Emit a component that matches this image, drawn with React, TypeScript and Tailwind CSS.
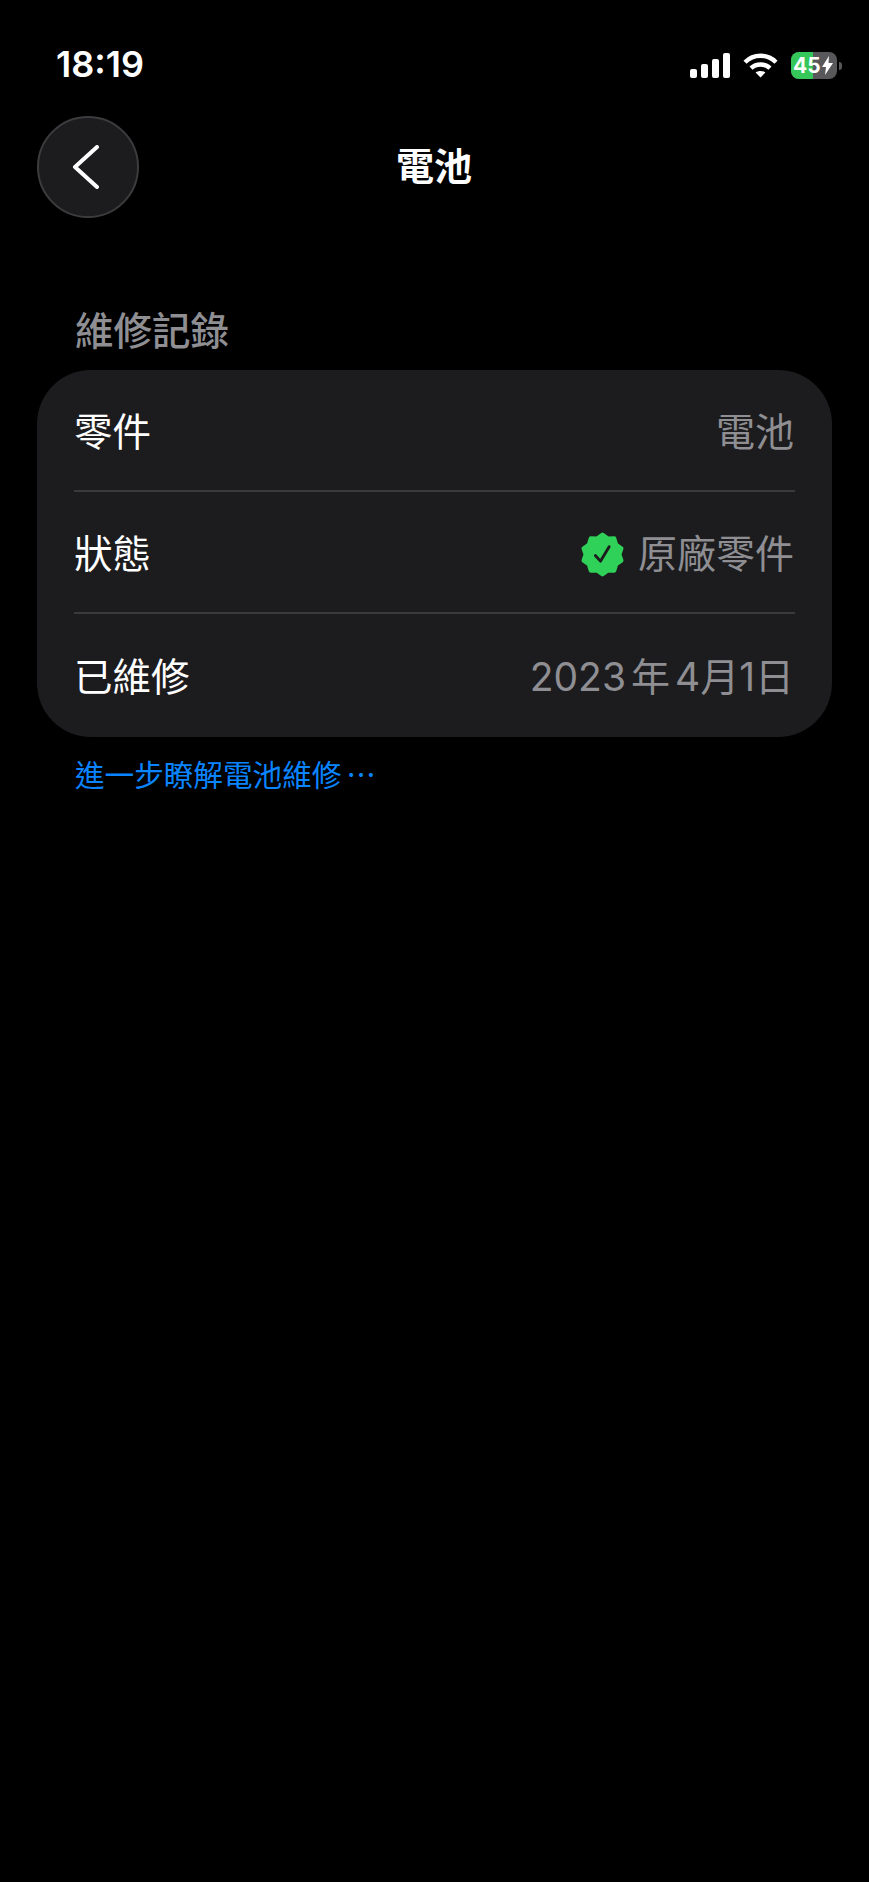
const cjk = 'font-["Inter","Noto_Sans_CJK_TC",sans-serif]'

interface RowProps {
  label: string
  children: React.ReactNode
  divider?: boolean
}

// ten-lobed seal outline around the centre of a 44 box
const sealPoints = Array.from({ length: 20 }, (_, i) => {
  const angle = (i * Math.PI) / 10 - Math.PI / 2
  const radius = i % 2 === 0 ? 19.5 : 16.5
  return `${22 + radius * Math.cos(angle)},${22 + radius * Math.sin(angle)}`
}).join(' ')

function SignalIcon() {
  return (
    <svg width="40" height="25" viewBox="0 0 40 25" fill="#fff">
      <rect x="0" y="16" width="7" height="9" rx="2" />
      <rect x="11" y="11" width="7" height="14" rx="2" />
      <rect x="22" y="6" width="7" height="19" rx="2" />
      <rect x="33" y="0" width="7" height="25" rx="2" />
    </svg>
  )
}

function WifiIcon() {
  return (
    <svg width="35" height="25" viewBox="0 0 35 25" fill="none" stroke="#fff" strokeWidth="4.4">
      <path d="M2 9.2C10.6 .6 24.4 .6 33 9.2" />
      <path d="M8 15.2c5.3-5 13.7-5 19 0" />
      <path d="M17.5 24.6l-4.9-5.2c2.8-2 7-2 9.8 0z" fill="#fff" stroke="none" />
    </svg>
  )
}

function BatteryIcon() {
  return (
    <div className="flex items-center gap-[2px]">
      <div className="relative flex h-[27px] w-[46px] overflow-hidden rounded-[8px] bg-[#58585a]">
        <div className="h-full w-[22px] bg-[#35c759]" />
        <div className="absolute inset-0 flex items-center pl-[2px] font-['Inter',sans-serif] text-[21px] leading-none font-bold text-white">
          45
          <svg width="11" height="19" viewBox="0 0 11 19" fill="#fff" className="ml-px">
            <path d="M7 0L0 11h4l-1 8 8-12H6.500z" />
          </svg>
        </div>
      </div>
      <div className="h-[8px] w-[3px] rounded-r-full bg-[#58585a]" />
    </div>
  )
}

function VerifiedBadge() {
  return (
    <svg width="45" height="45" viewBox="0 0 44 44">
      <polygon points={sealPoints} fill="#30d158" stroke="#30d158" strokeWidth="4" strokeLinejoin="round" />
      <path d="M15 23l5 5.500L28.500 14.500" fill="none" stroke="#1c1c1e" strokeWidth="2.800" strokeLinecap="round" strokeLinejoin="round" />
    </svg>
  )
}

function Row({ label, children, divider = true }: RowProps) {
  return (
    <div className={`mx-[37px] flex h-[122px] items-center justify-between pt-[5px] ${divider ? 'border-b-2 border-[#3a3a3c]' : ''}`}>
      <span className="text-[38.500px] text-white">{label}</span>
      {children}
    </div>
  )
}

export default function App() {
  return (
    <div className={`flex min-h-[1882px] w-[869px] flex-col bg-black ${cjk}`}>
      <div className="flex h-[84px] items-end justify-between pr-[27px] pl-[56px]">
        <span className="font-['Inter',sans-serif] text-[36px] leading-[40px] font-semibold text-white">18:19</span>
        <div className="flex items-center gap-[13px] pb-[5px]">
          <SignalIcon />
          <WifiIcon />
          <BatteryIcon />
        </div>
      </div>

      <div className="relative mt-[32px] flex h-[101px] items-center justify-center">
        <button className="absolute top-0 left-[37px] flex h-[102px] w-[102px] items-center justify-center rounded-full border-2 border-[#3c3c3e] bg-[#1c1c1e]">
          <svg width="28" height="44" viewBox="0 0 28 44" fill="none" stroke="#fff" strokeWidth="4" strokeLinecap="round" strokeLinejoin="round" className="-ml-[5px]">
            <path d="M25 2L3 22l22 20" />
          </svg>
        </button>
        <h1 className="-ml-px text-[38px] font-semibold text-white">電池</h1>
      </div>

      <h2 className="mt-[86px] ml-[75px] text-[38.500px] leading-[57px] font-medium text-[#8e8e93]">維修記錄</h2>

      <div className="mx-[37px] mt-[10px] rounded-[54px] bg-[#1c1c1e] pb-px">
        <Row label="零件">
          <span className="mr-px text-[39px] text-[#8e8e93]">電池</span>
        </Row>
        <Row label="狀態">
          <div className="mr-px flex items-center gap-[13px]">
            <VerifiedBadge />
            <span className="text-[39px] text-[#8e8e93]">原廠零件</span>
          </div>
        </Row>
        <Row label="已維修" divider={false}>
          <span className="mr-px text-[39px] text-[#8e8e93] [word-spacing:-6px]">2023 年 4月1日</span>
        </Row>
      </div>

      <a className="mt-[16px] ml-[75px] flex items-center text-[29.600px] leading-[45px] text-[#0a84ff]">
        進一步瞭解電池維修
        <span className="ml-[5px]">⋯</span>
      </a>
    </div>
  )
}
